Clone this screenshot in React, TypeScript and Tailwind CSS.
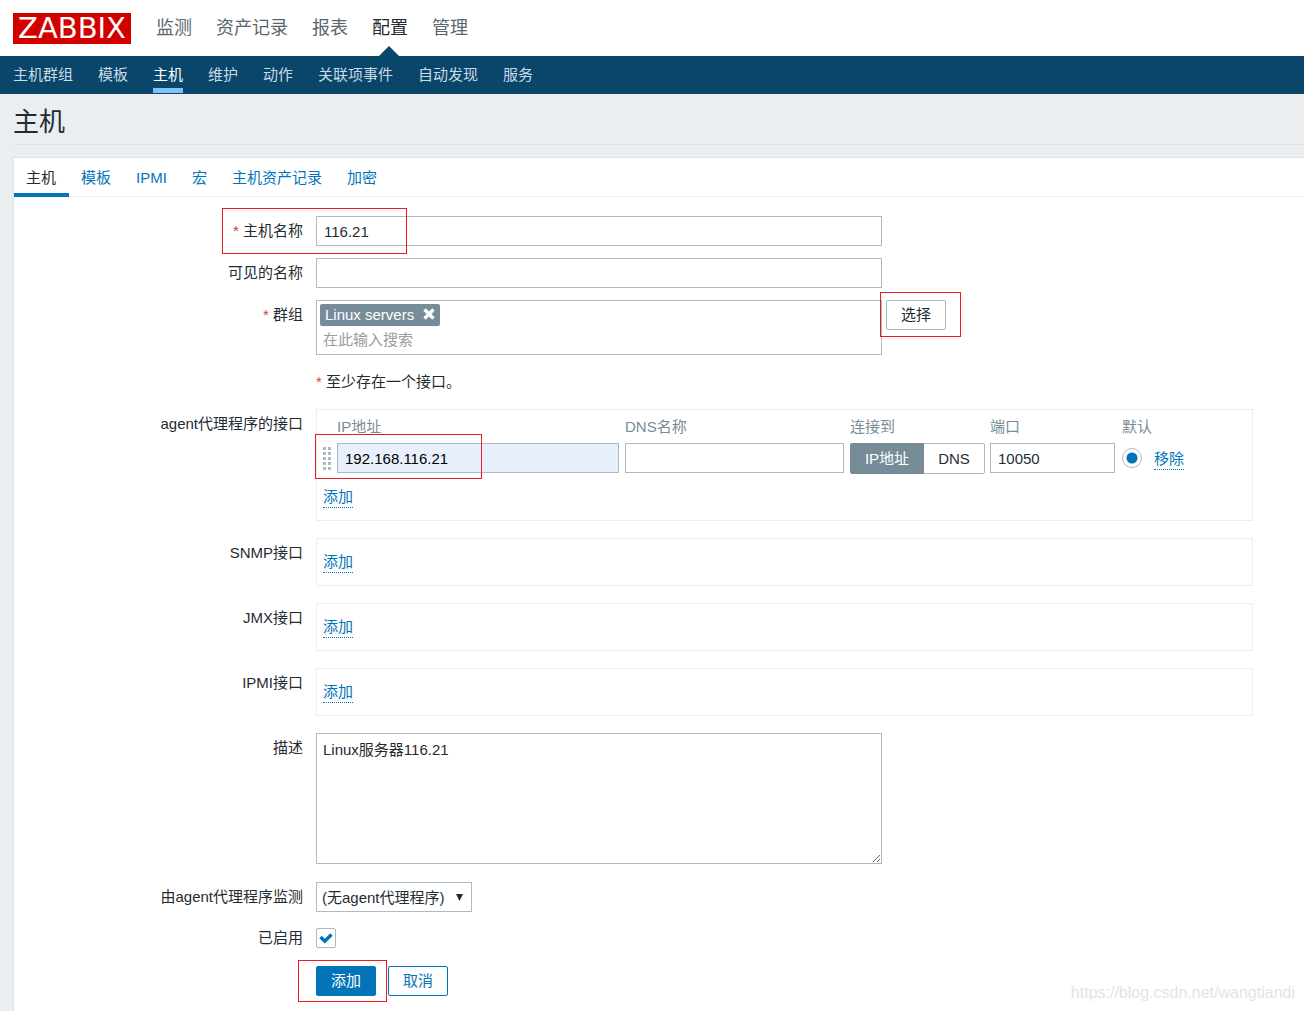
import { useState } from "react";
import type { ReactNode } from "react";

const mainMenu = ["监测", "资产记录", "报表", "配置", "管理"];
const subMenu = ["主机群组", "模板", "主机", "维护", "动作", "关联项事件", "自动发现", "服务"];
const tabs = ["主机", "模板", "IPMI", "宏", "主机资产记录", "加密"];
const otherInterfaces = ["SNMP接口", "JMX接口", "IPMI接口"];

const inputClass = "h-[30px] border border-[#acbbc2] bg-white px-[7px] text-[#1f2c33] outline-none";

function Row({
  label,
  htmlFor,
  required,
  className = "",
  children,
}: {
  label?: string;
  htmlFor?: string;
  required?: boolean;
  className?: string;
  children: ReactNode;
}) {
  const text = (
    <>
      {required && <span className="text-[#e33734]">* </span>}
      {label}
    </>
  );

  return (
    <div className={`relative flex items-start gap-[13px] ${className}`}>
      <div className="w-[289px] shrink-0 text-right leading-[30px]">
        {htmlFor ? <label htmlFor={htmlFor}>{text}</label> : text}
      </div>
      {children}
    </div>
  );
}

function Marker({ className }: { className: string }) {
  return <div className={`pointer-events-none absolute border border-[#ed1c24] ${className}`} />;
}

function LinkButton({ children }: { children: ReactNode }) {
  return (
    <button type="button" className="border-b border-dotted border-[#0275b8] leading-5 text-[#0275b8]">
      {children}
    </button>
  );
}

function DragHandle() {
  return (
    <svg width="8" height="23" viewBox="0 0 8 23" fill="#acbbc2">
      {[0, 5, 10, 15, 20].map((y) => (
        <g key={y}>
          <rect x="0" y={y} width="3" height="3" />
          <rect x="5" y={y} width="3" height="3" />
        </g>
      ))}
    </svg>
  );
}

export default function App() {
  const [enabled, setEnabled] = useState(true);
  const [connectBy, setConnectBy] = useState("ip");

  return (
    <div className="relative flex min-h-screen flex-col bg-[#ebeef0] font-['Liberation_Sans','Noto_Sans_CJK_SC',sans-serif] text-[15px] leading-5 text-[#1f2c33]">
      <header>
        <div className="flex h-14 items-center gap-[25px] bg-white pl-[13px]">
          <a
            href="#"
            className="flex h-[31px] w-[118px] items-center justify-center bg-[#d40000] font-['DejaVu_Sans',sans-serif] text-[29px] leading-none text-white"
          >
            ZABBIX
          </a>
          <nav className="flex h-full gap-6 text-lg">
            {mainMenu.map((item) => (
              <a
                key={item}
                href="#"
                className={`relative flex items-center ${item === "配置" ? "text-[#1f2c33]" : "text-[#5a666c]"}`}
              >
                {item}
                {item === "配置" && (
                  <svg className="absolute bottom-0 left-[7px]" width="20" height="10" viewBox="0 0 20 10">
                    <path d="M0 10 10 0l10 10z" fill="#0a466a" />
                  </svg>
                )}
              </a>
            ))}
          </nav>
        </div>
        <nav className="flex h-[38px] gap-[25px] bg-[#0a466a] px-[13px]">
          {subMenu.map((item) => (
            <a
              key={item}
              href="#"
              className={`mb-px flex items-center border-b-[5px] pt-[5px] ${
                item === "主机" ? "border-[#7dc3f3] text-white" : "border-transparent text-[#c9dbe6]"
              }`}
            >
              {item}
            </a>
          ))}
        </nav>
      </header>

      <div className="ml-[13px] border-b border-[#dfe4e7]">
        <h1 className="pt-3 pb-1.5 text-[26px] leading-8">主机</h1>
      </div>

      <main className="mt-3 ml-[13px] flex-1 border-t border-l border-[#dfe4e7] bg-white pb-[15px]">
        <div className="flex h-[39px] border-b border-[#ebeef0]">
          {tabs.map((tab, i) => (
            <a
              key={tab}
              href="#"
              className={`-mb-px flex items-center border-b-4 pt-1 pr-[13px] pl-3 ${
                i === 0 ? "border-[#0275b8] text-[#1f2c33]" : "border-transparent text-[#0275b8]"
              }`}
            >
              {tab}
            </a>
          ))}
        </div>

        <form className="pt-[19px]" onSubmit={(e) => e.preventDefault()}>
          <Row label="主机名称" htmlFor="host" required className="mb-3">
            <input id="host" className={`${inputClass} w-[566px]`} defaultValue="116.21" />
            <Marker className="-top-2 left-52 h-[46px] w-[185px]" />
          </Row>

          <Row label="可见的名称" htmlFor="visible-name" className="mb-3">
            <input id="visible-name" className={`${inputClass} w-[566px]`} />
          </Row>

          <Row label="群组" htmlFor="groups" required className="mb-3">
            <div className="flex gap-1">
              <div className="h-[55px] w-[566px] border border-[#acbbc2] p-[3px]">
                <span className="flex h-[22px] w-[120px] items-center justify-between rounded-xs bg-[#768d99] px-[5px] text-white">
                  Linux servers
                  <button type="button" aria-label="Linux servers" className="pb-0.5">
                    <svg width="12" height="12" viewBox="0 0 12 12" stroke="#fff" strokeWidth="3.4">
                      <path d="M1.5 1.5l9 9M10.5 1.5l-9 9" />
                    </svg>
                  </button>
                </span>
                <input
                  id="groups"
                  placeholder="在此输入搜索"
                  className="block h-[26px] w-full px-[3px] outline-none placeholder:text-[#9c9c9c]"
                />
              </div>
              <div className="relative h-[30px]">
                <button type="button" className="h-[30px] w-[60px] rounded-xs border border-[#acbbc2] bg-white">
                  选择
                </button>
                <Marker className="-top-2 -left-1.5 h-[45px] w-[81px]" />
              </div>
            </div>
          </Row>

          <Row className="mb-3">
            <p className="leading-[30px]">
              <span className="text-[#e33734]">* </span>至少存在一个接口。
            </p>
          </Row>

          <Row label="agent代理程序的接口" className="mb-[17px]">
            <div className="relative mr-[51px] h-28 flex-1 border border-[#ebeef0] px-1.5">
              <table className="mt-[7px] border-collapse text-left">
                <thead>
                  <tr className="h-[26px] align-top text-[#768d99]">
                    <th aria-label="排序" className="w-3.5 p-0" />
                    <th className="p-0 pr-1.5 font-normal">IP地址</th>
                    <th className="p-0 pr-1.5 font-normal">DNS名称</th>
                    <th className="p-0 pr-[5px] font-normal">连接到</th>
                    <th className="p-0 pr-[7px] font-normal">端口</th>
                    <th className="p-0 font-normal">默认</th>
                    <th className="p-0" />
                  </tr>
                </thead>
                <tbody>
                  <tr className="align-top">
                    <td className="p-0 pt-1">
                      <DragHandle />
                    </td>
                    <td className="p-0 pr-1.5">
                      <input
                        aria-label="IP地址"
                        className="block h-[30px] w-[282px] border border-[#acbbc2] bg-[#e8f0fe] px-[7px] text-black outline-none"
                        defaultValue="192.168.116.21"
                      />
                    </td>
                    <td className="p-0 pr-1.5">
                      <input aria-label="DNS名称" className={`${inputClass} block w-[219px]`} />
                    </td>
                    <td className="p-0 pr-[5px]">
                      <div className="flex h-[31px] w-[135px]">
                        <button
                          type="button"
                          onClick={() => setConnectBy("ip")}
                          className={`w-[74px] rounded-l-xs border ${
                            connectBy === "ip" ? "border-[#768d99] bg-[#768d99] text-white" : "border-[#acbbc2] bg-white"
                          }`}
                        >
                          IP地址
                        </button>
                        <button
                          type="button"
                          onClick={() => setConnectBy("dns")}
                          className={`flex-1 rounded-r-xs border border-l-0 ${
                            connectBy === "dns" ? "border-[#768d99] bg-[#768d99] text-white" : "border-[#acbbc2] bg-white"
                          }`}
                        >
                          DNS
                        </button>
                      </div>
                    </td>
                    <td className="p-0 pr-[7px]">
                      <input aria-label="端口" className={`${inputClass} block w-[125px]`} defaultValue="10050" />
                    </td>
                    <td className="p-0 pt-[5px] pr-0.5">
                      <input
                        type="radio"
                        aria-label="默认"
                        defaultChecked
                        className="block size-5 appearance-none rounded-full border border-[#acbbc2] bg-[radial-gradient(circle,#0275b8_5px,white_6px)]"
                      />
                    </td>
                    <td className="p-0 pt-1.5 pl-0.5">
                      <LinkButton>移除</LinkButton>
                    </td>
                  </tr>
                </tbody>
              </table>
              <div className="mt-[13px]">
                <LinkButton>添加</LinkButton>
              </div>
              <Marker className="top-6 -left-0.5 h-[45px] w-[167px]" />
            </div>
          </Row>

          {otherInterfaces.map((name) => (
            <Row key={name} label={name} className="mb-[17px]">
              <div className="mr-[51px] h-12 flex-1 border border-[#ebeef0] px-1.5 pt-[13px]">
                <LinkButton>添加</LinkButton>
              </div>
            </Row>
          ))}

          <Row label="描述" htmlFor="description" className="mb-[18px]">
            <textarea
              id="description"
              className="block h-[131px] w-[566px] border border-[#acbbc2] px-1.5 py-1.5 outline-none"
              defaultValue="Linux服务器116.21"
            />
          </Row>

          <Row label="由agent代理程序监测" htmlFor="proxy" className="mb-4">
            <div className="relative">
              <select
                id="proxy"
                className="block h-[30px] w-[156px] appearance-none border border-[#acbbc2] bg-white px-[5px] pt-0.5 outline-none"
              >
                <option>(无agent代理程序)</option>
              </select>
              <svg className="pointer-events-none absolute top-3 right-[9px]" width="7" height="7" viewBox="0 0 7 7">
                <path d="M0 0h7L3.5 7z" fill="#1f2c33" />
              </svg>
            </div>
          </Row>

          <div className="mb-[18px] flex h-5 items-center gap-[13px]">
            <label htmlFor="enabled" className="w-[289px] shrink-0 text-right">
              已启用
            </label>
            <div className="relative size-5">
              <input
                id="enabled"
                type="checkbox"
                checked={enabled}
                onChange={(e) => setEnabled(e.target.checked)}
                className="block size-5 appearance-none rounded-xs border border-[#acbbc2] bg-white"
              />
              {enabled && (
                <svg className="pointer-events-none absolute inset-0" width="20" height="20" viewBox="0 0 20 20" fill="none">
                  <path d="M4.5 9l4.3 4.2 6.7-6.7" stroke="#0275b8" strokeWidth="3.4" />
                </svg>
              )}
            </div>
          </div>

          <Row>
            <div className="relative flex gap-3">
              <button type="submit" className="h-[30px] w-[60px] rounded-xs border border-[#0275b8] bg-[#0275b8] text-white">
                添加
              </button>
              <button type="button" className="h-[30px] w-[60px] rounded-xs border border-[#0275b8] bg-white text-[#0275b8]">
                取消
              </button>
              <Marker className="-top-1.5 -left-[18px] h-[42px] w-[89px]" />
            </div>
          </Row>
        </form>
      </main>

      <span className="pointer-events-none absolute right-[9px] bottom-1.5 text-base text-[#e4e4e4]">
        https://blog.csdn.net/wangtiandi
      </span>
    </div>
  );
}
